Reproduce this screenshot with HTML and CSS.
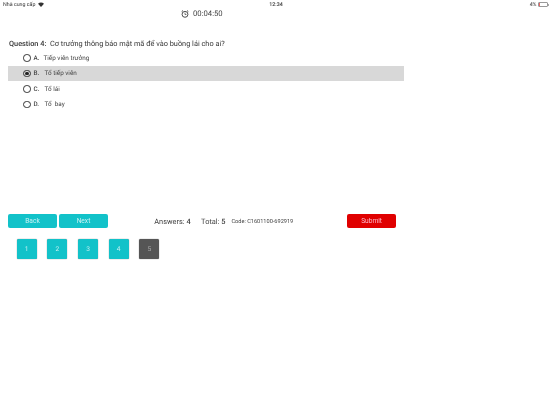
FILE: index.html
```html
<!DOCTYPE html>
<html lang="vi">
<head>
<meta charset="utf-8">
<title>Quiz</title>
<link rel="stylesheet" href="styles.css">
</head>
<body>
<div class="sheet">
<div class="status">
  <div class="status-left"><span>Nhà cung cấp</span>
    <svg class="wifi" viewBox="0 0 10 8" width="6" height="5"><path d="M0 2.6C2.8 0 7.2 0 10 2.6L5 8z" fill="#333"/></svg>
  </div>
  <div class="status-time">12:34</div>
  <div class="status-right"><span>4%</span><span class="battery"></span><span class="battery-cap"></span></div>
</div>
<div class="timer">
  <svg viewBox="0 0 12 12" width="8" height="8" class="clock"><circle cx="6" cy="6.5" r="4.4" fill="none" stroke="#333" stroke-width="1.3"/><path d="M6 4v2.8h2.2" fill="none" stroke="#333" stroke-width="1"/><path d="M1 2.4 3 .8M11 2.4 9 .8" stroke="#333" stroke-width="1.3"/></svg>
  <span>00:04:50</span>
</div>
<div class="question"><b>Question 4:</b>&nbsp; Cơ trưởng thông báo mật mã để vào buồng lái cho ai?</div>
<div class="options">
  <div class="option"><span class="radio"></span><b>A.</b><span class="answer short">Tiếp viên trưởng</span></div>
  <div class="option selected"><span class="radio on"></span><b>B.</b><span class="answer">Tổ tiếp viên</span></div>
  <div class="option"><span class="radio"></span><b>C.</b><span class="answer">Tổ lái</span></div>
  <div class="option"><span class="radio"></span><b>D.</b><span class="answer">Tổ&nbsp; bay</span></div>
</div>
<div class="actions">
  <button class="btn teal">Back</button>
  <button class="btn teal">Next</button>
  <div class="count first">Answers: <b>4</b></div>
  <div class="count">Total: <b>5</b></div>
  <div class="code">Code: C1601100-692919</div>
  <button class="btn red">Submit</button>
</div>
<div class="pages">
  <div class="page">1</div>
  <div class="page">2</div>
  <div class="page">3</div>
  <div class="page">4</div>
  <div class="page current">5</div>
</div>
</div>
</body>
</html>
```
FILE: styles.css
```css
* { box-sizing: border-box; }
html, body { margin: 0; padding: 0; }
body { width: 552px; height: 414px; background: #fff; font-family: Roboto, "Noto Sans", sans-serif; color: #333; overflow: hidden; text-rendering: geometricPrecision; }
.sheet { height: 414px; background: #fff; filter: blur(0.3px); }
.status { height: 9px; padding: 0 3px; display: flex; align-items: center; justify-content: space-between; font-size: 5.3px; color: #333; }
.status-left { display: flex; align-items: center; gap: 3px; width: 60px; }
.status-time { font-weight: 500; }
.status-right { display: flex; align-items: center; justify-content: flex-end; width: 60px; }
.battery { width: 9.5px; height: 5px; border: 0.5px solid #999; border-radius: 1px; margin-left: 2px; background: linear-gradient(90deg, #e66 8%, transparent 8%); }
.battery-cap { width: 1px; height: 2px; background: #aaa; }
.timer { height: 10px; padding: 0 0 1px 181px; display: flex; align-items: center; gap: 4px; font-size: 7.7px; color: #444; }
.question { margin: 20px 0 0 9px; font-size: 7.35px; line-height: 10px; color: #333; height: 10px; }
.question b { font-weight: 500; }
.options { margin: 1px 0 0 8px; width: 396px; display: flex; flex-direction: column; }
.option { height: 15.5px; display: flex; align-items: center; padding-left: 15px; font-size: 6.35px; color: #444; }
.option b { font-weight: 500; margin-left: 3px; width: 8px; }
.option .answer { margin-left: 3px; }
.option .answer.short { margin-left: 2px; }
.selected { background: #d8d8d8; }
.radio { width: 7.5px; height: 7.5px; border: 1px solid #333; border-radius: 50%; display: inline-flex; align-items: center; justify-content: center; }
.radio.on::after { content: ""; width: 3.5px; height: 3.5px; border-radius: 50%; background: #222; }
.actions { margin: 102px 0 0 8.3px; width: 387.5px; display: flex; align-items: center; height: 14.3px; }
.btn { border: 0; height: 14.3px; border-radius: 2px; color: #fff; font: 400 6.6px Roboto, sans-serif; padding: 0; }
.btn.teal { background: #12c2c9; width: 48.4px; margin-right: 2.6px; color: #c8f2f4; }
.btn.red { background: #e00000; width: 48.5px; margin-left: auto; color: #fbc; }
.count { font-size: 7.4px; color: #444; margin-right: 10.5px; }
.count.first { margin-left: 44px; }
.count b { font-weight: 500; }
.code { font-size: 5.6px; color: #444; margin-left: -4.5px; padding-top: 1px; }
.pages { margin: 11px 0 0 16.7px; display: flex; gap: 10.67px; }
.page { width: 20px; height: 20px; border-radius: 1.5px; background: #12c2c9; box-shadow: 0 0 1px #555; color: #bfeef0; font-size: 6.6px; display: flex; align-items: center; justify-content: center; }
.page.current { background: #555; color: #aaa; }
```
